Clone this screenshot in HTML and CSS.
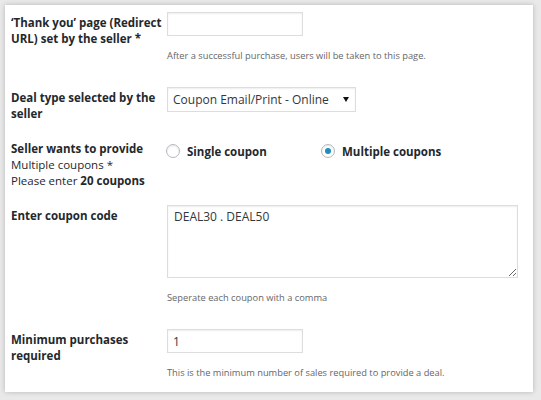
FILE: index.html
```
<!DOCTYPE html>
<html lang="en">
	<head>
		<meta charset="UTF-8">
		<title>Deal settings</title>
		<link rel="stylesheet" href="styles.css">
	</head>
	<body>
		<div class="panel">
			<div class="row">
				<div class="label">‘Thank you’ page (Redirect URL) set by the seller *</div>
				<div class="field">
					<input type="text" class="text-input" name="redirect_url">
					<p class="desc">After a successful purchase, users will be taken to this page.</p>
				</div>
			</div>

			<div class="row">
				<div class="label">Deal type selected by the seller</div>
				<div class="field">
					<span class="select-wrap">
						<select class="select" name="deal_type">
							<option>Coupon Email/Print - Online</option>
						</select>
					</span>
				</div>
			</div>

			<div class="row">
				<div class="label">
					<span class="line">Seller wants to provide</span>
					<span class="line normal">Multiple coupons *</span>
					<span class="line normal">Please enter <b>20 coupons</b></span>
				</div>
				<div class="field radios">
					<label class="option"><input type="radio" name="coupon_mode" value="single"> Single coupon</label>
					<label class="option"><input type="radio" name="coupon_mode" value="multiple" checked> Multiple coupons</label>
				</div>
			</div>

			<div class="row">
				<div class="label">Enter coupon code</div>
				<div class="field">
					<textarea class="textarea" name="coupons">DEAL30 . DEAL50</textarea>
					<p class="desc">Seperate each coupon with a comma</p>
				</div>
			</div>

			<div class="row">
				<div class="label">Minimum purchases required</div>
				<div class="field">
					<input type="text" class="text-input" name="min_purchases" value="1">
					<p class="desc">This is the minimum number of sales required to provide a deal.</p>
				</div>
			</div>
		</div>
	</body>
</html>
```
FILE: styles.css
```
body {
	margin: 0;
	background: #e9e9e9;
	font-family: "Open Sans", "Noto Sans", sans-serif;
	color: #23282d;
}

.panel {
	box-sizing: border-box;
	width: 528px;
	height: 387px;
	margin: 5px 8px 8px 5px;
	padding: 7px 0 0 6px;
	background: #fff;
	box-shadow: 0 0 5px rgba(0, 0, 0, 0.22);
}

.row {
	display: grid;
	grid-template-columns: 156px 1fr;
	margin-bottom: 16px;
}

.label {
	padding-top: 3px;
	font-size: 11.5px;
	font-weight: 700;
	line-height: 16px;
}

.label .line {
	display: block;
}

.label .normal {
	font-weight: 400;
}

.label b {
	font-weight: 700;
}

.field {
	min-width: 0;
}

.text-input,
.select,
.textarea {
	box-sizing: border-box;
	margin: 0;
	border: 1px solid #ddd;
	background: #fff;
	box-shadow: inset 0 1px 2px rgba(0, 0, 0, 0.07);
	font-family: "Open Sans", "Noto Sans", sans-serif;
	font-size: 12px;
	color: #32373c;
	outline: none;
	display: block;
}

.text-input {
	width: 136px;
	height: 24px;
	padding: 0 5px;
}

.select-wrap {
	position: relative;
	display: inline-block;
}

.select {
	width: 189px;
	height: 25px;
	padding: 0 20px 0 5px;
	appearance: none;
	-webkit-appearance: none;
	border-radius: 0;
}

.select-wrap::after {
	content: "";
	position: absolute;
	top: 10px;
	left: 176px;
	border-left: 3px solid transparent;
	border-right: 3px solid transparent;
	border-top: 5px solid #111;
}

.textarea {
	width: 351px;
	height: 73px;
	padding: 3px 6px;
	line-height: 16px;
	resize: vertical;
}

.desc {
	margin: 13px 0 8px;
	font-size: 9.3px;
	line-height: 14px;
	color: #666;
}

.radios {
	display: flex;
	padding-top: 5px;
}

.option {
	display: flex;
	align-items: center;
	gap: 7px;
	width: 155px;
	height: 16px;
	font-size: 11.5px;
	font-weight: 700;
}

.option input {
	appearance: none;
	-webkit-appearance: none;
	position: relative;
	width: 14px;
	height: 14px;
	margin: 0 0 0 -1px;
	border: 1px solid #b4b9be;
	border-radius: 50%;
	background: #fff;
	box-shadow: inset 0 1px 2px rgba(0, 0, 0, 0.1);
}

.option input:checked::before {
	content: "";
	position: absolute;
	top: 3px;
	left: 3px;
	width: 6px;
	height: 6px;
	border-radius: 50%;
	background: #1e8cbe;
}
```
